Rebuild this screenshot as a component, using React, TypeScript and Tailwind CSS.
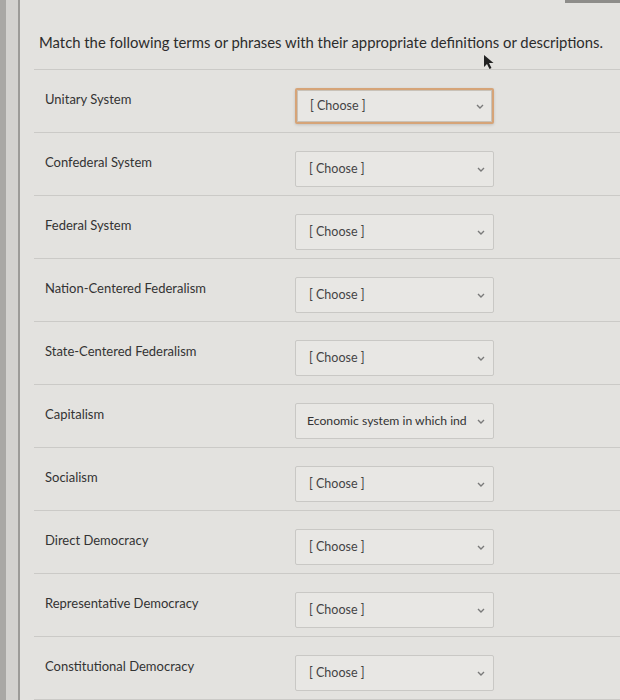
import React from "react";

const rows = [
  { term: "Unitary System", value: "[ Choose ]", focused: true },
  { term: "Confederal System", value: "[ Choose ]" },
  { term: "Federal System", value: "[ Choose ]" },
  { term: "Nation-Centered Federalism", value: "[ Choose ]" },
  { term: "State-Centered Federalism", value: "[ Choose ]" },
  { term: "Capitalism", value: "Economic system in which ind", picked: true },
  { term: "Socialism", value: "[ Choose ]" },
  { term: "Direct Democracy", value: "[ Choose ]" },
  { term: "Representative Democracy", value: "[ Choose ]" },
  { term: "Constitutional Democracy", value: "[ Choose ]" },
];

function Chevron() {
  return (
    <svg width="8" height="5" viewBox="0 0 8 5" className="shrink-0">
      <path d="M1 1l3 3 3-3" fill="none" stroke="#7a7a7a" strokeWidth="1.4" />
    </svg>
  );
}

function Select({ value, focused, picked }: { value: string; focused?: boolean; picked?: boolean }) {
  return (
    <div
      className={`flex h-[36px] w-[199px] items-center justify-between gap-[10px] rounded-[2px] bg-[#e8e7e4] pl-[11px] pr-[8px] ${
        focused
          ? "border-2 border-[#d6a478] shadow-[inset_0_0_0_1px_#c9c2b8,0_1px_3px_rgba(0,0,0,0.15)]"
          : "border border-[#c9c8c5]"
      }`}
    >
      <span
        className={`overflow-hidden whitespace-nowrap ${
          picked ? "text-[12.2px] text-[#333]" : "pl-[2px] text-[12.5px] text-[#444]"
        }`}
      >
        {value}
      </span>
      <Chevron />
    </div>
  );
}

export default function App() {
  return (
    <div
      className="relative flex h-[700px] w-[620px] overflow-hidden bg-[#e3e2df]"
      style={{ fontFamily: "Lato, 'Open Sans', sans-serif" }}
    >
      <div className="flex w-[20px] shrink-0 border-r-2 border-[#9c9b98]">
        <div className="w-[6px] bg-[#a9a8a5]" />
        <div className="flex-1 bg-[#d3d2cf]" />
      </div>

      <div className="flex-1 pt-[31px]">
        <div className="absolute right-0 top-0 h-[3px] w-[55px] bg-[#8e8d8a]" />
        <h1 className="whitespace-nowrap pl-[19px] text-[14.85px] leading-[22px] text-[#2c2c2c]">
          Match the following terms or phrases with their appropriate definitions or descriptions.
        </h1>

        <div className="ml-[14px] mt-[16px] border-t border-[#cbcac7]">
          {rows.map((r) => (
            <div key={r.term} className="flex h-[63px] border-b border-[#cbcac7]">
              <div className="w-[261px] pl-[11px] pt-[20px] text-[13px] text-[#333]">{r.term}</div>
              <div className="pt-[18px]">
                <Select value={r.value} focused={r.focused} picked={r.picked} />
              </div>
            </div>
          ))}
        </div>
      </div>

      <svg className="absolute left-[482px] top-[54px]" width="12" height="16" viewBox="0 0 12 16">
        <path d="M2 1l0 12 3-3 2.5 5 2-1-2.5-5 4.5 0z" fill="#222" />
      </svg>
    </div>
  );
}
